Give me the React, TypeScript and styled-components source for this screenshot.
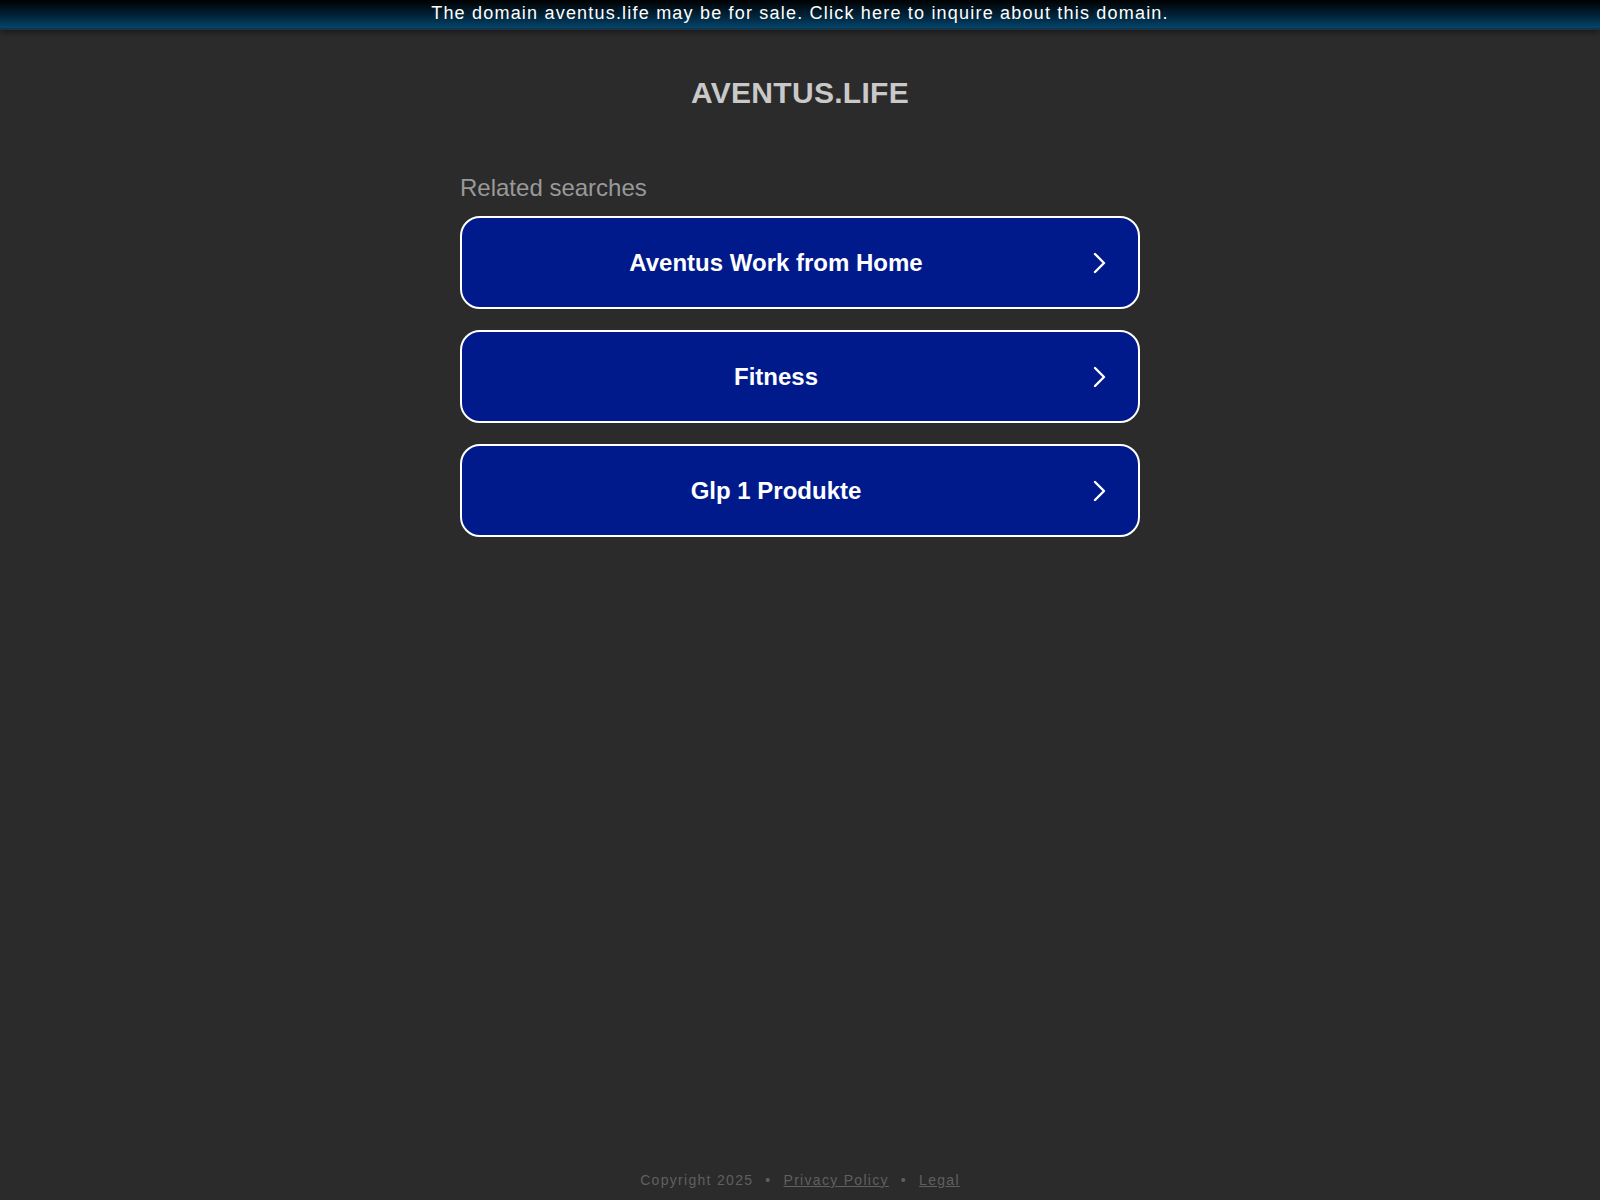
import styled, { createGlobalStyle } from 'styled-components';

const GlobalStyle = createGlobalStyle`
  html, body {
    margin: 0;
    padding: 0;
    background: #2b2b2b;
  }
  body {
    font-family: Arial, "Liberation Sans", sans-serif;
  }
`;

const Page = styled.div`
  min-height: 100vh;
  display: flex;
  flex-direction: column;
  align-items: center;
`;

const Banner = styled.a`
  align-self: stretch;
  height: 27px;
  padding-bottom: 1px;
  display: flex;
  align-items: center;
  justify-content: center;
  background: linear-gradient(to bottom, #000000 0%, #02263d 60%, #04456c 100%);
  border-bottom: 2px solid #173347;
  box-shadow: 0 2px 6px rgba(0, 0, 0, 0.45);
  color: #ffffff;
  font-size: 18px;
  letter-spacing: 1.2px;
  text-decoration: none;
`;

const Title = styled.h1`
  margin: 46px 0 0;
  font-size: 30px;
  line-height: 34px;
  font-weight: bold;
  letter-spacing: 0.3px;
  color: #c9c9c9;
`;

const Searches = styled.div`
  width: 680px;
  margin-top: 64px;
  display: flex;
  flex-direction: column;
  gap: 21px;
`;

const SearchesLabel = styled.div`
  font-size: 24px;
  line-height: 28px;
  color: #999999;
  margin-bottom: -7px;
`;

const SearchLink = styled.a`
  box-sizing: border-box;
  height: 93px;
  display: flex;
  align-items: center;
  gap: 12px;
  padding: 0 32px 0 10px;
  background: #001a8c;
  border: 2px solid #ffffff;
  border-radius: 20px;
  color: #ffffff;
  text-decoration: none;
`;

const SearchText = styled.span`
  flex: 1;
  text-align: center;
  font-size: 24px;
  font-weight: bold;
`;

const Footer = styled.footer`
  margin-top: auto;
  padding-bottom: 12px;
  display: flex;
  align-items: center;
  font-size: 14px;
  letter-spacing: 1.3px;
  color: #606060;
`;

const FooterLink = styled.a`
  color: #606060;
  text-decoration: underline;
`;

const Dot = styled.span`
  margin: 0 12px;
`;

const Chevron = () => (
  <svg width="14" height="22" viewBox="0 0 14 22" fill="none">
    <polyline
      points="3,2 12,11 3,20"
      stroke="#ffffff"
      strokeWidth="2.4"
      strokeLinecap="round"
      strokeLinejoin="round"
    />
  </svg>
);

const searches = ['Aventus Work from Home', 'Fitness', 'Glp 1 Produkte'];

export default function App() {
  return (
    <>
      <GlobalStyle />
      <Page>
        <Banner href="#">
          The domain aventus.life may be for sale. Click here to inquire about this domain.
        </Banner>
        <Title>AVENTUS.LIFE</Title>
        <Searches>
          <SearchesLabel>Related searches</SearchesLabel>
          {searches.map((s) => (
            <SearchLink key={s} href="#">
              <SearchText>{s}</SearchText>
              <Chevron />
            </SearchLink>
          ))}
        </Searches>
        <Footer>
          Copyright 2025
          <Dot>•</Dot>
          <FooterLink href="#">Privacy Policy</FooterLink>
          <Dot>•</Dot>
          <FooterLink href="#">Legal</FooterLink>
        </Footer>
      </Page>
    </>
  );
}
